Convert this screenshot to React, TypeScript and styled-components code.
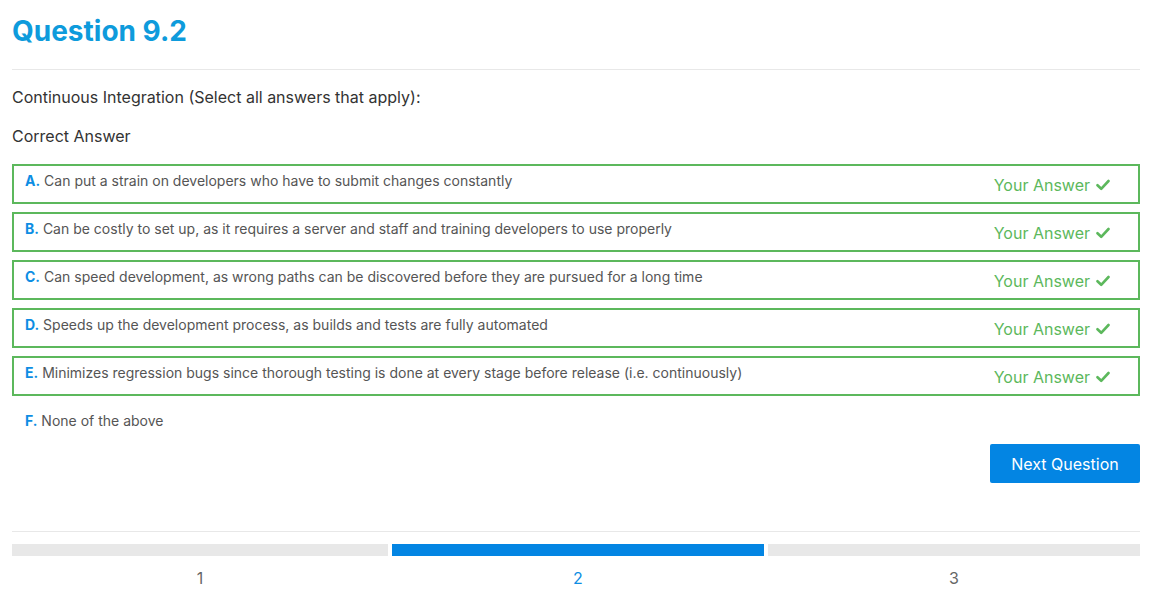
import React from "react";
import styled, { createGlobalStyle } from "styled-components";

const Global = createGlobalStyle`
  html, body { margin: 0; padding: 0; background: #fff; }
  body { font-family: Inter, "Noto Sans", sans-serif; color: #333; }
  * { box-sizing: border-box; }
`;

const Page = styled.div`
  padding: 0 15px 0 12px;
`;

const Title = styled.h1`
  margin: 0;
  padding: 13px 0 20px;
  font-size: 28px;
  font-weight: 700;
  color: #0e9bdc;
  line-height: 36px;
  border-bottom: 1px solid #e8e8e8;
`;

const Prompt = styled.p`
  margin: 16px 0 0;
  font-size: 16px;
  line-height: 22px;
  color: #333;
`;

const Label = styled.p`
  margin: 17px 0 17px;
  font-size: 16px;
  line-height: 22px;
  color: #333;
`;

const List = styled.div`
  display: flex;
  flex-direction: column;
  gap: 8px;
`;

const Option = styled.div<{ $selected: boolean }>`
  display: flex;
  align-items: center;
  justify-content: space-between;
  height: 40px;
  padding: 0 28px 0 11px;
  border: 2px solid ${(p) => (p.$selected ? "#5cb85c" : "transparent")};
`;

const OptionText = styled.span`
  font-size: 14px;
  color: #555;
  margin-top: -8px;
`;

const Letter = styled.b`
  color: #0d8de3;
  font-weight: 700;
`;

const YourAnswer = styled.span`
  display: flex;
  align-items: center;
  gap: 6px;
  color: #5cb85c;
  font-size: 16px;
  margin-top: 2px;
`;

const Actions = styled.div`
  display: flex;
  justify-content: flex-end;
  margin-top: 0;
`;

const NextButton = styled.button`
  width: 150px;
  height: 39px;
  border: none;
  border-radius: 2px;
  background: #0385e3;
  color: #fff;
  font-family: Inter, "Noto Sans", sans-serif;
  font-size: 16px;
  cursor: pointer;
`;

const Footer = styled.div`
  margin-top: 48px;
  border-top: 1px solid #e8e8e8;
  padding-top: 12px;
`;

const Steps = styled.div`
  display: grid;
  grid-template-columns: 376fr 372fr 372fr;
  gap: 4px;
`;

const Step = styled.div`
  display: flex;
  flex-direction: column;
  align-items: center;
  gap: 11px;
`;

const Bar = styled.div<{ $active: boolean }>`
  width: 100%;
  height: 12px;
  background: ${(p) => (p.$active ? "#0385e3" : "#e8e8e8")};
`;

const StepNum = styled.span<{ $active: boolean }>`
  font-size: 16px;
  line-height: 22px;
  color: ${(p) => (p.$active ? "#0d8de3" : "#666")};
`;

const Check = () => (
  <svg width="14" height="12" viewBox="0 0 14 12" aria-hidden>
    <path d="M1.5 6.2 L5.2 9.8 L12.5 2" fill="none" stroke="#5cb85c" strokeWidth="2.6" strokeLinecap="round" strokeLinejoin="round" />
  </svg>
);

const options = [
  { l: "A.", t: "Can put a strain on developers who have to submit changes constantly", s: true },
  { l: "B.", t: "Can be costly to set up, as it requires a server and staff and training developers to use properly", s: true },
  { l: "C.", t: "Can speed development, as wrong paths can be discovered before they are pursued for a long time", s: true },
  { l: "D.", t: "Speeds up the development process, as builds and tests are fully automated", s: true },
  { l: "E.", t: "Minimizes regression bugs since thorough testing is done at every stage before release (i.e. continuously)", s: true },
  { l: "F.", t: "None of the above", s: false },
];

export default function App() {
  return (
    <Page>
      <Global />
      <Title>Question 9.2</Title>
      <Prompt>Continuous Integration (Select all answers that apply):</Prompt>
      <Label>Correct Answer</Label>
      <List>
        {options.map((o) => (
          <Option key={o.l} $selected={o.s}>
            <OptionText>
              <Letter>{o.l}</Letter> {o.t}
            </OptionText>
            {o.s && (
              <YourAnswer>
                Your Answer <Check />
              </YourAnswer>
            )}
          </Option>
        ))}
      </List>
      <Actions>
        <NextButton>Next Question</NextButton>
      </Actions>
      <Footer>
        <Steps>
          {[1, 2, 3].map((n) => (
            <Step key={n}>
              <Bar $active={n === 2} />
              <StepNum $active={n === 2}>{n}</StepNum>
            </Step>
          ))}
        </Steps>
      </Footer>
    </Page>
  );
}
